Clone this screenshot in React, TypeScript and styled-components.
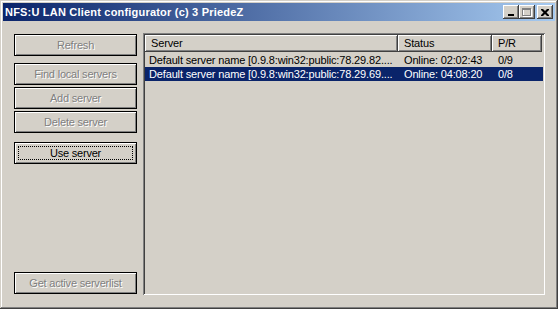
import React from "react";
import styled, { createGlobalStyle, css } from "styled-components";

const Global = createGlobalStyle`
  html, body { margin: 0; padding: 0; background: #d4d0c8; }
  * { box-sizing: border-box; }
`;

const Window = styled.div`
  width: 558px;
  height: 309px;
  background: #d4d0c8;
  padding: 3px;
  display: flex;
  flex-direction: column;
  box-shadow: inset -1px -1px #404040, inset 1px 1px #d4d0c8,
    inset -2px -2px #808080, inset 2px 2px #ffffff;
  font-family: "Liberation Sans", Arial, sans-serif;
  font-size: 11px;
  letter-spacing: -0.15px;
  color: #000;
`;

const TitleBar = styled.div`
  height: 18px;
  flex: none;
  display: flex;
  align-items: center;
  padding: 0 2px 0 2px;
  background: linear-gradient(to right, #0a246a, #a6caf0);
`;

const Title = styled.div`
  flex: 1;
  color: #fff;
  font-weight: bold;
  font-size: 11px;
  letter-spacing: 0.2px;
  white-space: nowrap;
`;

const CaptionButton = styled.div<{ $gap?: boolean }>`
  width: 16px;
  height: 14px;
  background: #d4d0c8;
  margin-left: ${(p) => (p.$gap ? "2px" : "0")};
  box-shadow: inset -1px -1px #404040, inset 1px 1px #ffffff,
    inset -2px -2px #808080, inset 2px 2px #d4d0c8;
  display: flex;
  align-items: center;
  justify-content: center;
  svg { display: block; }
`;

const Client = styled.div`
  flex: 1;
  display: flex;
  padding: 11px 10px 11px 11px;
  margin-top: 1px;
  min-height: 0;
`;

const ButtonColumn = styled.div`
  width: 123px;
  flex: none;
  display: flex;
  flex-direction: column;
  margin-right: 6px;
  padding-top: 1px;
  padding-bottom: 1px;
  letter-spacing: -0.2px;
`;

const Button = styled.div<{ $disabled?: boolean; $focused?: boolean; $mt?: number }>`
  position: relative;
  height: 22px;
  flex: none;
  margin-top: ${(p) => (p.$mt === undefined ? "0" : `${p.$mt}px`)};
  border: 1px solid #000;
  background: #d4d0c8;
  box-shadow: inset 1px 1px #ffffff, inset -1px -1px #808080;
  display: flex;
  align-items: center;
  justify-content: center;
  white-space: nowrap;
  ${(p) =>
    p.$disabled
      ? css`
          color: #808080;
          text-shadow: 1px 1px 0 #ffffff;
        `
      : css`
          color: #000;
        `}
  ${(p) =>
    p.$focused &&
    css`
      &::after {
        content: "";
        position: absolute;
        inset: 3px;
        border: 1px dotted #000;
      }
    `}
`;

const BottomButton = styled(Button)`
  margin-top: auto;
`;

const ListView = styled.div`
  flex: 1;
  display: flex;
  flex-direction: column;
  padding: 2px;
  background: #d4d0c8;
  box-shadow: inset 1px 1px #808080, inset -1px -1px #ffffff,
    inset 2px 2px #404040, inset -2px -2px #d4d0c8;
`;

const cols = "253px 94px 50px";

const HeaderRow = styled.div`
  display: grid;
  grid-template-columns: ${cols};
  height: 17px;
  flex: none;
`;

const HeaderCell = styled.div`
  padding-left: 6px;
  line-height: 16px;
  background: #d4d0c8;
  box-shadow: inset -1px -1px #404040, inset 1px 1px #ffffff,
    inset -2px -2px #808080;
  white-space: nowrap;
  overflow: hidden;
`;

const Rows = styled.div`
  padding-top: 1px;
  display: flex;
  flex-direction: column;
`;

const Row = styled.div<{ $selected?: boolean }>`
  display: grid;
  grid-template-columns: ${cols};
  height: 14px;
  line-height: 14px;
  background: ${(p) => (p.$selected ? "#0a246a" : "transparent")};
  color: ${(p) => (p.$selected ? "#ffffff" : "#000000")};
`;

const Cell = styled.div<{ $first?: boolean }>`
  padding-left: ${(p) => (p.$first ? "4px" : "6px")};
  white-space: nowrap;
`;

const servers = [
  { name: "Default server name [0.9.8:win32:public:78.29.82....", status: "Online: 02:02:43", pr: "0/9" },
  { name: "Default server name [0.9.8:win32:public:78.29.69....", status: "Online: 04:08:20", pr: "0/8", selected: true },
];

export default function App() {
  return (
    <>
      <Global />
      <Window>
        <TitleBar>
          <Title>NFS:U LAN Client configurator (c) 3 PriedeZ</Title>
          <CaptionButton>
            <svg width="8" height="8" viewBox="0 0 8 8">
              <rect x="1" y="6" width="6" height="2" fill="#000" />
            </svg>
          </CaptionButton>
          <CaptionButton>
            <svg width="10" height="9" viewBox="0 0 10 9">
              <rect x="1.5" y="1.5" width="8" height="7" fill="none" stroke="#fff" />
              <rect x="0.5" y="0.5" width="8" height="7" fill="none" stroke="#808080" />
              <rect x="0" y="0" width="9" height="2" fill="#808080" />
            </svg>
          </CaptionButton>
          <CaptionButton $gap>
            <svg width="8" height="7" viewBox="0 0 8 7">
              <path d="M0 0h2l2 2 2-2h2v1L5.5 3.5 8 6v1H6L4 5 2 7H0V6l2.5-2.5L0 1z" fill="#000" />
            </svg>
          </CaptionButton>
        </TitleBar>
        <Client>
          <ButtonColumn>
            <Button $disabled>Refresh</Button>
            <Button $disabled $mt={7}>Find local servers</Button>
            <Button $disabled $mt={2}>Add server</Button>
            <Button $disabled $mt={2}>Delete server</Button>
            <Button $focused $mt={9}>Use server</Button>
            <BottomButton $disabled>Get active serverlist</BottomButton>
          </ButtonColumn>
          <ListView>
            <HeaderRow>
              <HeaderCell>Server</HeaderCell>
              <HeaderCell>Status</HeaderCell>
              <HeaderCell>P/R</HeaderCell>
            </HeaderRow>
            <Rows>
              {servers.map((s) => (
                <Row key={s.name} $selected={s.selected}>
                  <Cell $first>{s.name}</Cell>
                  <Cell>{s.status}</Cell>
                  <Cell>{s.pr}</Cell>
                </Row>
              ))}
            </Rows>
          </ListView>
        </Client>
      </Window>
    </>
  );
}
